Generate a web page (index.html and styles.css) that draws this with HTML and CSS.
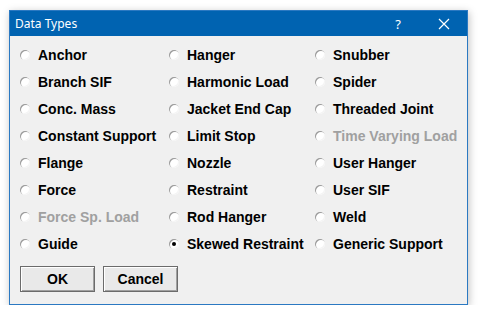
FILE: index.html
```html
<!DOCTYPE html>
<html>
<head>
    <link rel="stylesheet" href="styles.css">
    <title>Data Types</title>
</head>
<body>
    <div class="dialog">
        <div class="titlebar">
            <span class="title">Data Types</span>
            <span class="help">?</span>
            <span class="close">
                <svg width="12" height="12" viewBox="0 0 12 12"><path d="M1 1 L11 11 M11 1 L1 11" stroke="#fff" stroke-width="1.2"/></svg>
            </span>
        </div>
        <div class="content">
            <div class="grid">
                <label class="opt"><span class="radio"></span>Anchor</label>
                <label class="opt"><span class="radio"></span>Hanger</label>
                <label class="opt"><span class="radio"></span>Snubber</label>

                <label class="opt"><span class="radio"></span>Branch SIF</label>
                <label class="opt"><span class="radio"></span>Harmonic Load</label>
                <label class="opt"><span class="radio"></span>Spider</label>

                <label class="opt"><span class="radio"></span>Conc. Mass</label>
                <label class="opt"><span class="radio"></span>Jacket End Cap</label>
                <label class="opt"><span class="radio"></span>Threaded Joint</label>

                <label class="opt"><span class="radio"></span>Constant Support</label>
                <label class="opt"><span class="radio"></span>Limit Stop</label>
                <label class="opt disabled"><span class="radio"></span>Time Varying Load</label>

                <label class="opt"><span class="radio"></span>Flange</label>
                <label class="opt"><span class="radio"></span>Nozzle</label>
                <label class="opt"><span class="radio"></span>User Hanger</label>

                <label class="opt"><span class="radio"></span>Force</label>
                <label class="opt"><span class="radio"></span>Restraint</label>
                <label class="opt"><span class="radio"></span>User SIF</label>

                <label class="opt disabled"><span class="radio"></span>Force Sp. Load</label>
                <label class="opt"><span class="radio"></span>Rod Hanger</label>
                <label class="opt"><span class="radio"></span>Weld</label>

                <label class="opt"><span class="radio"></span>Guide</label>
                <label class="opt"><span class="radio checked"></span>Skewed Restraint</label>
                <label class="opt"><span class="radio"></span>Generic Support</label>
            </div>
            <div class="buttons">
                <button class="btn">OK</button>
                <button class="btn">Cancel</button>
            </div>
        </div>
    </div>
</body>
</html>
```
FILE: styles.css
```css
html{
    background-color: #ffffff;
}
body{
    margin: 0;
    padding: 10px 0 0 9px;
    font-family: "Liberation Sans", Arial, sans-serif;
}
.dialog{
    width: 457px;
    height: 293px;
    border: 1px solid #2b79c2;
    background-color: #f0f0f0;
    box-shadow: 1px 2px 8px rgba(0, 0, 0, 0.25);
    display: flex;
    flex-direction: column;
}
.titlebar{
    height: 25px;
    background-color: #0063b1;
    color: #fff;
    display: flex;
    align-items: center;
    font-family: "Noto Sans", "Open Sans", sans-serif;
    font-size: 12px;
}
.title{
    flex: 1;
    padding-left: 5px;
}
.help{
    width: 46px;
    text-align: center;
    font-size: 13px;
}
.close{
    width: 46px;
    display: flex;
    justify-content: center;
}
.content{
    padding: 5px 0 0 10px;
}
.grid{
    display: grid;
    grid-template-columns: 149px 146px 1fr;
    grid-auto-rows: 27px;
}
.opt{
    display: flex;
    align-items: center;
    font-weight: bold;
    font-size: 14px;
    color: #000;
    white-space: nowrap;
}
.opt.disabled{
    color: #a0a0a0;
}
.radio{
    width: 10px;
    height: 10px;
    border-radius: 50%;
    background-color: #fff;
    box-shadow: inset 1px 1px 0 #9a9a9a, inset -1px -1px 0 #f4f4f4;
    margin-right: 8px;
    position: relative;
    flex: none;
}
.radio.checked::after{
    content: "";
    position: absolute;
    left: 3px;
    top: 3px;
    width: 4px;
    height: 4px;
    border-radius: 50%;
    background-color: #000;
}
.buttons{
    display: flex;
    gap: 8px;
    margin-top: 9px;
}
.btn{
    width: 75px;
    height: 26px;
    background-color: #e9e9e9;
    border: 1px solid #6b6b6b;
    box-shadow: inset 1px 1px 0 #fff, inset -1px -1px 0 #a0a0a0;
    font-family: "Liberation Sans", Arial, sans-serif;
    font-weight: bold;
    font-size: 14px;
    color: #000;
    padding: 0;
}
```
